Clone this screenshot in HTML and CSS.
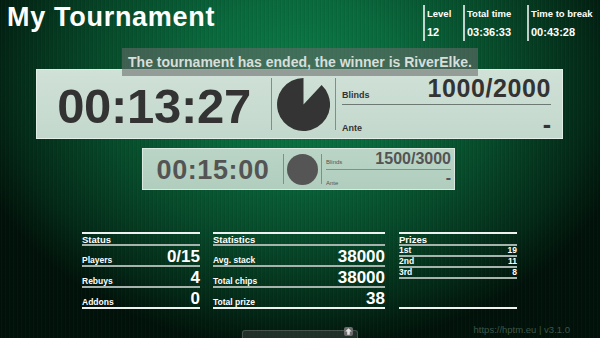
FILE: index.html
```html
<!DOCTYPE html>
<html lang="en">
<head>
<meta charset="utf-8">
<title>My Tournament</title>
<link rel="stylesheet" href="styles.css">
</head>
<body>
<div class="page">
  <header class="top">
    <h1 class="title">My Tournament</h1>
    <div class="info">
      <div class="info-col col-level"><span class="info-label">Level</span><span class="info-value">12</span></div>
      <div class="info-col col-total"><span class="info-label">Total time</span><span class="info-value">03:36:33</span></div>
      <div class="info-col col-break"><span class="info-label">Time to break</span><span class="info-value">00:43:28</span></div>
    </div>
  </header>

  <div class="notice">The tournament has ended, the winner is RiverElke.</div>

  <section class="level-box current">
    <div class="clock">00:13:27</div>
    <div class="divider"></div>
    <div class="pie-wrap">
      <svg class="pie" width="53" height="53" viewBox="0 0 53 53"><path d="M26.5 26.5 L44.6 7.1 A26.5 26.5 0 1 1 26.5 0 Z" fill="#343434"/></svg>
    </div>
    <div class="divider"></div>
    <div class="blinds">
      <div class="blind-row top-row"><span class="b-label">Blinds</span><span class="b-value">1000/2000</span></div>
      <div class="blind-row bottom-row"><span class="b-label">Ante</span><span class="b-value dash">-</span></div>
    </div>
  </section>

  <section class="level-box next">
    <div class="clock">00:15:00</div>
    <div class="divider"></div>
    <div class="pie-wrap">
      <div class="dot"></div>
    </div>
    <div class="divider"></div>
    <div class="blinds">
      <div class="blind-row top-row"><span class="b-label">Blinds</span><span class="b-value">1500/3000</span></div>
      <div class="blind-row bottom-row"><span class="b-label">Ante</span><span class="b-value dash">-</span></div>
    </div>
  </section>

  <section class="tables">
    <div class="table t-status">
      <div class="t-head">Status</div>
      <div class="t-row"><span class="t-label">Players</span><span class="t-value">0/15</span></div>
      <div class="t-row"><span class="t-label">Rebuys</span><span class="t-value">4</span></div>
      <div class="t-row last"><span class="t-label">Addons</span><span class="t-value">0</span></div>
    </div>
    <div class="table t-stats">
      <div class="t-head">Statistics</div>
      <div class="t-row"><span class="t-label">Avg. stack</span><span class="t-value">38000</span></div>
      <div class="t-row"><span class="t-label">Total chips</span><span class="t-value">38000</span></div>
      <div class="t-row last"><span class="t-label">Total prize</span><span class="t-value">38</span></div>
    </div>
    <div class="table t-prizes">
      <div class="t-head">Prizes</div>
      <div class="p-row"><span>1st</span><span>19</span></div>
      <div class="p-row"><span>2nd</span><span>11</span></div>
      <div class="p-row"><span>3rd</span><span>8</span></div>
    </div>
  </section>

  <footer class="footer">https://hptm.eu | v3.1.0</footer>

  <div class="handle">
    <svg class="handle-icon" width="9" height="9" viewBox="0 0 9 9"><rect x="0" y="0" width="9" height="9" rx="2" fill="#6c6c6c"/><path d="M4.5 1.2 L7.8 4.6 L5.8 4.6 L5.8 7.8 L3.2 7.8 L3.2 4.6 L1.2 4.6 Z" fill="#e2e2e2"/></svg>
  </div>
</div>
</body>
</html>
```

FILE: styles.css
```css
html, body {
  margin: 0;
  padding: 0;
}

body {
  width: 600px;
  height: 338px;
  overflow: hidden;
  font-family: "Liberation Sans", Arial, sans-serif;
  color: #fff;
  background-color: #020f08;
  background-image:
    repeating-linear-gradient(90deg, rgba(0, 0, 0, 0.06) 0 1px, rgba(255, 255, 255, 0.02) 1px 2px, transparent 2px 4px),
    radial-gradient(ellipse 340px 270px at 300px 80px, #0b7c47 0%, #096a3d 30%, #064a2a 60%, #032a17 85%, #01120a 100%);
}

.page {
  position: relative;
  width: 600px;
  height: 338px;
  display: flex;
  flex-direction: column;
}

/* header */
.top {
  height: 69px;
  display: flex;
  justify-content: space-between;
  align-items: flex-start;
}

.title {
  margin: 4px 0 0 7px;
  font-size: 27px;
  line-height: 27px;
  letter-spacing: 0.7px;
  font-weight: bold;
  color: #fff;
}

.info {
  display: flex;
  margin: 5px 5px 0 0;
}

.info-col {
  height: 36px;
  border-left: 2px solid rgba(255, 255, 255, 0.75);
  padding: 2px 0 0 2px;
  box-sizing: border-box;
  display: flex;
  flex-direction: column;
}

.col-level { width: 40px; }
.col-total { width: 64px; }
.col-break { width: 68px; }

.info-label {
  font-size: 9.5px;
  line-height: 14px;
  font-weight: bold;
  white-space: nowrap;
}

.info-value {
  margin-top: 4px;
  font-size: 11px;
  line-height: 14px;
  font-weight: bold;
}

/* notice overlay */
.notice {
  position: absolute;
  left: 122px;
  top: 48px;
  width: 356px;
  height: 28px;
  line-height: 28px;
  text-align: center;
  font-size: 14px;
  font-weight: bold;
  color: #d8dfdb;
  background: rgba(104, 106, 105, 0.58);
  z-index: 2;
}

/* level boxes */
.level-box {
  display: flex;
  align-items: center;
  box-sizing: border-box;
  border: 1px solid rgba(235, 245, 240, 0.7);
}

.level-box.current {
  margin-left: 36px;
  width: 527px;
  height: 70px;
  background: linear-gradient(180deg, #d0e1d7 0%, #c3d8cc 100%);
  color: #333;
}

.level-box.next {
  margin: 9px 0 0 142px;
  width: 313px;
  height: 42px;
  background: linear-gradient(180deg, #bad5c6 0%, #b0cdbd 100%);
  color: #545454;
}

.clock {
  text-align: center;
  font-weight: bold;
  white-space: nowrap;
}

.current .clock {
  width: 234px;
  font-size: 49px;
  line-height: 49px;
  letter-spacing: -0.3px;
  padding-top: 4px;
}

.next .clock {
  width: 140px;
  font-size: 27px;
  line-height: 27px;
  letter-spacing: 0.6px;
  padding-top: 3px;
}

.divider {
  width: 1px;
  background: #7f8f87;
}

.current .divider { height: 52px; }
.next .divider { height: 30px; }

.pie-wrap {
  display: flex;
  justify-content: center;
  align-items: center;
}

.current .pie-wrap { width: 63px; }
.next .pie-wrap { width: 37px; }

.pie { display: block; }

.dot {
  width: 31px;
  height: 31px;
  border-radius: 50%;
  background: #555;
}

.blinds {
  flex: 1;
  align-self: stretch;
  display: flex;
  flex-direction: column;
}

.current .blinds { padding: 0 11px 0 6px; }
.next .blinds { padding: 0 3px 0 4px; }

.blind-row {
  display: flex;
  justify-content: space-between;
  align-items: flex-end;
}

.b-label {
  font-weight: bold;
}

.b-value {
  font-weight: bold;
  white-space: nowrap;
}

.current .top-row {
  height: 34px;
  border-bottom: 1px solid #6d7a73;
}

.current .bottom-row { flex: 1; }

.current .b-label {
  font-size: 9px;
  line-height: 9px;
}

.current .top-row .b-label { margin-bottom: 4px; }
.current .bottom-row .b-label { margin-bottom: 5px; }

.current .b-value {
  font-size: 25px;
  line-height: 25px;
  letter-spacing: 0.6px;
  margin-bottom: 3px;
}

.current .dash { margin-bottom: 1px; letter-spacing: 0; }

.next .top-row {
  height: 21px;
  border-bottom: 1px solid #80918a;
}

.next .bottom-row { flex: 1; }

.next .b-label {
  font-size: 6px;
  line-height: 6px;
  font-weight: normal;
}

.next .top-row .b-label { margin-bottom: 4px; }
.next .bottom-row .b-label { margin-bottom: 3px; }

.next .b-value {
  font-size: 16px;
  line-height: 16px;
  margin-bottom: 2px;
}

.next .dash { margin-bottom: 3px; }

/* tables */
.tables {
  display: flex;
  margin: 42px 0 0 82px;
  align-items: stretch;
}

.table {
  display: flex;
  flex-direction: column;
  border-top: 2px solid #eef2f0;
  border-bottom: 2px solid #eef2f0;
}

.t-status { width: 118px; }
.t-stats { width: 172px; margin-left: 13px; }
.t-prizes { width: 118px; margin-left: 14px; }

.t-head {
  height: 10px;
  line-height: 11px;
  font-size: 9.5px;
  font-weight: bold;
  border-bottom: 2px solid #a7b3ad;
}

.t-row {
  height: 19px;
  display: flex;
  justify-content: space-between;
  align-items: flex-end;
  border-bottom: 2px solid #a7b3ad;
}

.t-row.last { border-bottom: none; }

.t-label {
  font-size: 8.5px;
  line-height: 10px;
  font-weight: bold;
}

.t-value {
  font-size: 17px;
  line-height: 17px;
  font-weight: bold;
}

.p-row {
  height: 9px;
  display: flex;
  justify-content: space-between;
  align-items: flex-end;
  font-size: 8.5px;
  line-height: 9px;
  font-weight: bold;
  border-bottom: 2px solid #a7b3ad;
}

/* footer */
.footer {
  margin-top: 15px;
  padding-right: 30px;
  text-align: right;
  font-size: 9.5px;
  line-height: 12px;
  color: #3d5548;
}

.handle {
  position: absolute;
  left: 242px;
  top: 330px;
  width: 116px;
  height: 12px;
  box-sizing: border-box;
  background: rgba(72, 78, 75, 0.45);
  border: 1px solid rgba(120, 125, 122, 0.45);
  border-radius: 3px 3px 0 0;
}

.handle-icon {
  position: absolute;
  left: 101px;
  top: -4px;
}
```
